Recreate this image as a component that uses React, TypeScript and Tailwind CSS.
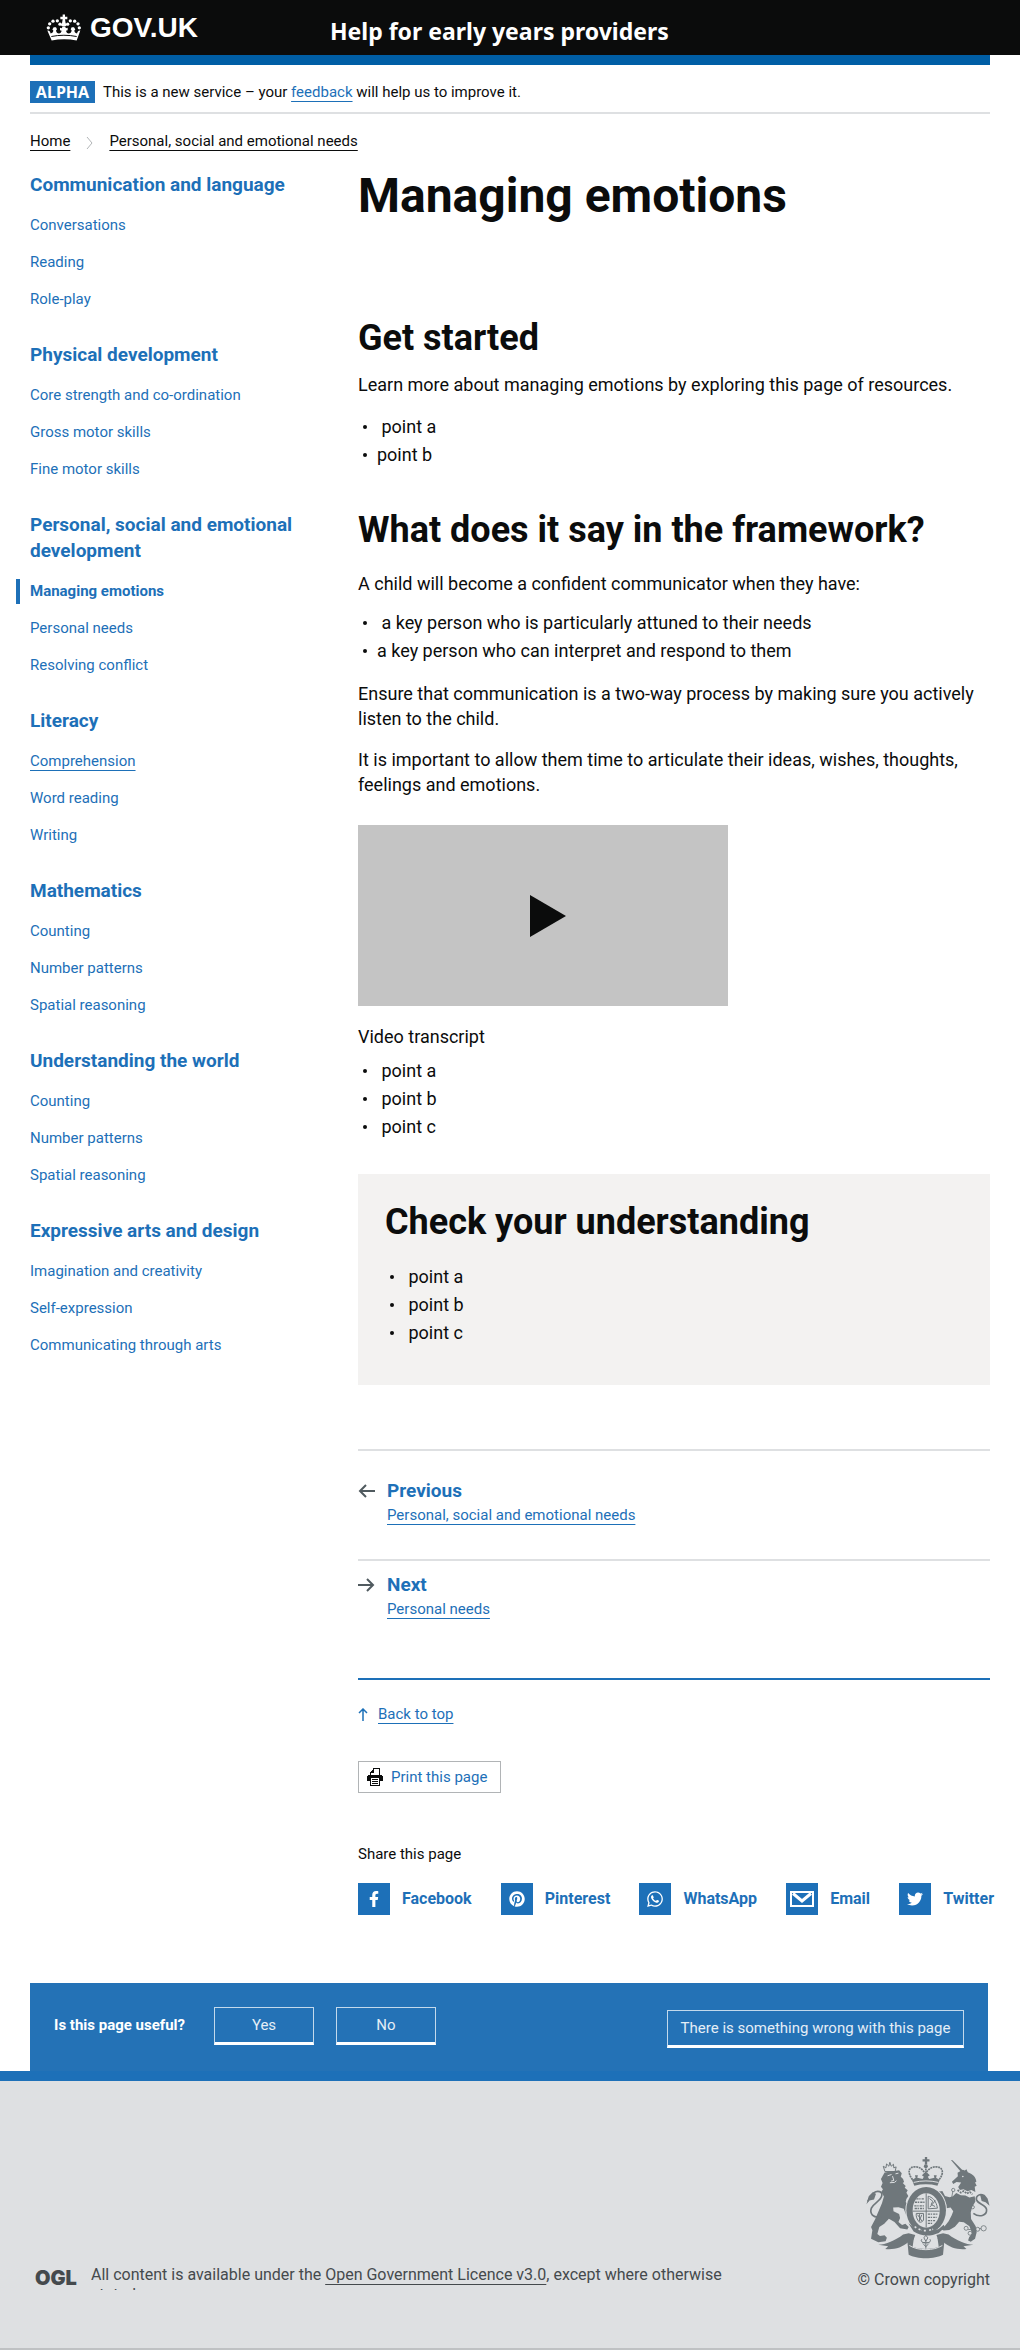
import type { ReactNode } from "react";
import { FaFacebookF, FaPinterest, FaTwitter, FaWhatsapp } from "react-icons/fa";

const topics = [
  { title: "Communication and language", items: ["Conversations", "Reading", "Role-play"] },
  { title: "Physical development", items: ["Core strength and co-ordination", "Gross motor skills", "Fine motor skills"] },
  { title: "Personal, social and emotional development", items: ["Managing emotions", "Personal needs", "Resolving conflict"] },
  { title: "Literacy", items: ["Comprehension", "Word reading", "Writing"] },
  { title: "Mathematics", items: ["Counting", "Number patterns", "Spatial reasoning"] },
  { title: "Understanding the world", items: ["Counting", "Number patterns", "Spatial reasoning"] },
  { title: "Expressive arts and design", items: ["Imagination and creativity", "Self-expression", "Communicating through arts"] },
];

function CrownLogo() {
  return (
    <svg viewBox="20 25 108 80" className="h-[27px] w-9 shrink-0" fill="#fff" aria-hidden="true">
      <path d="M70 26h7v7h7v7h-7l2 12 5 4-5 5h-11l-5-5 5-4 2-12h-7v-7h7z" />
      {[[27, 66], [31, 54], [41, 46], [54, 45], [62, 55], [120, 66], [116, 54], [106, 46], [93, 45], [85, 55]].map(([x, y]) => (
        <circle key={`${x}-${y}`} cx={x} cy={y} r="5" />
      ))}
      <path d="M24 74c6-1 8 3 10 9 5-1 8-4 8-9l-3-3 4-7h7l3 6-3 4c1 6 4 9 9 9 4 0 7-3 8-8l-5-2v-7l5 1 3-5h7l3 5 5-1v7l-5 2c1 5 4 8 8 8 5 0 8-3 9-9l-3-4 3-6h7l4 7-3 3c0 5 3 8 8 9 2-6 4-10 10-9l-11 30c-24-5-51-5-75 0z" />
      <path d="M36 92c24-5 51-5 76 0" stroke="#0b0c0c" strokeWidth="3" fill="none" />
    </svg>
  );
}

function PrinterIcon() {
  return (
    <svg viewBox="0 0 16 18" className="h-[18px] w-4 shrink-0" shapeRendering="crispEdges" aria-hidden="true">
      <path d="M6 0h7v8H3V4h1V3h1V2h1z" fill="#0b0c0c" />
      <path d="M7 1h5v6H4V5h3z" fill="#fff" />
      <path d="M0 8h1V7h14v1h1v5H0z" fill="#0b0c0c" />
      <path d="M4 7h8v-1H4z" fill="#fff" />
      <path d="M3 9h10v9H3z" fill="#0b0c0c" />
      <path d="M4 10h8v7H4z" fill="#fff" />
      <path d="M5 11h6v1H5zM5 13h6v1H5zM5 15h6v1H5z" fill="#0b0c0c" />
    </svg>
  );
}

function EnvelopeIcon() {
  return (
    <svg viewBox="0 0 24 16" className="h-4 w-6" fill="none" stroke="#fff" aria-hidden="true">
      <rect x="1" y="1" width="22" height="14" strokeWidth="2" />
      <path d="M3 2.5 12 10l9-7.5" strokeWidth="3" />
    </svg>
  );
}

function Arrow({ direction }: { direction: "left" | "right" | "up" }) {
  if (direction === "up") {
    return (
      <svg viewBox="0 0 10 13" className="h-[13px] w-2.5" fill="none" stroke="#1d70b8" strokeWidth="1.5" aria-hidden="true">
        <path d="M5 13V1M1 5l4-4 4 4" />
      </svg>
    );
  }
  return (
    <svg viewBox="0 0 17 14" className="h-3.5 w-[17px]" fill="none" stroke="#505a5f" strokeWidth="2" aria-hidden="true">
      {direction === "left" ? <path d="M17 7H2M8 1 2 7l6 6" /> : <path d="M0 7h15M9 1l6 6-6 6" />}
    </svg>
  );
}

function RoyalArms() {
  const ink = "#6f777b";
  const ground = "#dee0e2";
  return (
    <svg viewBox="75 48 376 312" className="h-[103px] w-[125px]" fill={ink} aria-hidden="true">
      {/* Lion */}
      <path d="M134 95l-5-16 8 5 2-12 7 7 3-12 4 12 7-6 1 11 7-3-3 14z" fill="none" stroke={ink} strokeWidth="3" />
      <path d="M133 98l44-7 8 9-3 11 7 7 3 9-4 3 9 9-3 5 9 8-4 7 6 10-6 9-2 9 12 14 3 17-4 11-10-3-7-18-16-5-16 1 1 11 17 9 3 12-5 12 11 9 10-4 10 10-4 8-22-4-17-19-17-10-14 15-15 10-6 21 8 6 14-2 7 8-4 10-22 3-22-10 4-26-4-10 12-23 21-49 6-20-8-14 5-8-6-8 5-11-5-12z" />
      <path d="M142 108l12-4m12-2l9-2m-18 9l4 13-8 2m-4 5l14-1 6-5" fill="none" stroke={ground} strokeWidth="3" />
      <path d="M122 232c-24 5-35-10-29-26 6-15 26-20 31-36 5-15-13-19-24-10-8 7-14 16-18 26" fill="none" stroke={ink} strokeWidth="5" />
      <path d="M78 194l7-24 12-12 10 4-6 18-14 3z" />
      {/* Unicorn */}
      <path d="M334 60l5 1 37 37-5 6z" />
      <path d="M354 99l16-9 6 2 5-4 4 9c14 5 25 14 26 29l-4 2 5 10-6 3 2 16-12-6-12 4-12-6-11 2-5-9 9-14-14-1-10 6-4-7 18-17z" />
      <circle cx="370" cy="110" r="2.5" fill={ground} />
      <path d="M354 151l10 8 9-5 9 8 9-5 8 7" fill="none" stroke={ink} strokeWidth="5" strokeDasharray="6 3" />
      <path d="M350 160l14 7 14 1 12 6 16-4 2 16-10 17-4 16 1 20 14 22 3 18-5 20-13 9-8-4 3-10 9-12-8-21-17-12-14-2-13 15-17 10-17 2-8-4 11-9 12-15 9-18 5-13-8-11-20 4-9-7 4-5 13 1-12-18-12-7-6-8 4-8 13-2 8 15 14 4 10-3z" />
      <path d="M402 222c18 13 41 7 40-11-1-17-27-16-31-31-2-13 13-19 22-12" fill="none" stroke={ink} strokeWidth="5" />
      <path d="M422 164l14 1 9 12 6 22-12-11-12-4z" />
      <g fill="none" stroke={ink} strokeWidth="2.5">
        <circle cx="380" cy="267" r="6" />
        <circle cx="392" cy="282" r="6" />
        <circle cx="415" cy="270" r="6" />
        <circle cx="433" cy="267" r="8" />
        <circle cx="341" cy="151" r="5" />
        <circle cx="335" cy="190" r="5" />
        <circle cx="400" cy="203" r="5" />
        <path d="M386 271l24-2m10-1h6m-86-114l-6 32" />
      </g>
      {/* Crown */}
      <path d="M255 51h7v7h7v7h-7v9h-7v-9h-7v-7h7z" />
      <circle cx="258" cy="79" r="6" />
      <path d="M218 120c-18-23-12-40 9-39 16 0 27 14 29 24 3-10 15-24 31-24 21-1 29 16 11 39M258 86v32" fill="none" stroke={ink} strokeWidth="5" strokeDasharray="6 2" />
      <path d="M216 121l11-7-2-8h9l-2 8 16 4 4-7-6-5 8-7h8l8 7-6 5 4 7 16-4-2-8h9l-2 8 11 7-7 17c-23-6-47-6-70 0z" />
      <path d="M221 128c24-6 50-6 75 0" fill="none" stroke={ground} strokeWidth="3" />
      {/* Garter and shield */}
      <ellipse cx="259" cy="212" rx="63" ry="73" fill={ground} />
      <ellipse cx="259" cy="212" rx="60" ry="70" />
      <ellipse cx="259" cy="213" rx="41" ry="52" fill={ground} />
      <path d="M259 161v104M218 215h82" stroke={ink} strokeWidth="3" />
      <g fill="none" stroke={ink} strokeWidth="4" strokeDasharray="7 2 4 3">
        <path d="M229 178h25M225 188h29M223 199h31M224 207h28" />
        <path d="M264 224h29M264 234h27M264 244h22M264 252h16" />
      </g>
      <path d="M265 170c12 2 25 14 28 36l-28 2zM270 203l17-20m-18-6l10 8-5 10 12 6M229 222h22v20c-6 8-12 9-16 2-5-7-7-14-6-22zm4 4l14 20m-8-22v22m7-20l-9 20" fill="none" stroke={ink} strokeWidth="3" />
      <path d="M205 252l20 15c22 13 47 12 72 2l15-13 4 8-19 17c-26 11-52 11-76-4z" />
      <path d="M224 262l8 5m4 2l10 4m6 1h10m6-1l12-3" fill="none" stroke={ground} strokeWidth="5" strokeDasharray="6 4" />
      {/* Ribbon */}
      <path d="M114 317c22 0 52-13 75-31l17-4 20 5-5 14-15 7c-20 18-45 25-71 22l9-9zM402 317c-22 0-52-13-75-31l-17-4-20 5 5 14 15 7c20 18 45 25 71 22l-9-9z" />
      <path d="M202 307l20-12-4 28c23 9 57 9 79 0l-4-28 21 12-4 40c-24 14-80 14-104 0z" />
      <path d="M208 319c27 17 73 17 100 0" fill="none" stroke={ground} strokeWidth="3" />
      <path d="M258 288l6 8-6 10-6-10zM246 300c-6 6 3 12 10 10m14-10c6 6-3 12-10 10m-13 1h22m-11-6v24m0-6l-7-8m7 8l7-8" fill="none" stroke={ink} strokeWidth="3" />
    </svg>
  );
}

const link = "text-[#1d70b8] underline decoration-1 underline-offset-4 [text-decoration-skip-ink:none]";

function Bullets({ items }: { items: string[] }) {
  return (
    <ul className="text-lg leading-7">
      {items.map((text) => (
        <li key={text} className="flex items-center pl-[5px]">
          <span className="mr-2.5 size-1 shrink-0 rounded-full bg-[#0b0c0c]" aria-hidden="true" />
          <span className="whitespace-pre-wrap">{text}</span>
        </li>
      ))}
    </ul>
  );
}

function Pager({ direction, label, page }: { direction: "left" | "right"; label: string; page: string }) {
  return (
    <div className="flex gap-3 leading-6">
      <span className="flex h-6 items-center">
        <Arrow direction={direction} />
      </span>
      <div>
        <div className="text-[19px] font-bold text-[#1d70b8]">{label}</div>
        <a href="#" className={`block text-[15px] ${link}`}>{page}</a>
      </div>
    </div>
  );
}

function ShareLink({ icon, label }: { icon: ReactNode; label: string }) {
  return (
    <li>
      <a href="#" className="flex items-center gap-3 text-base font-bold text-[#1d70b8]">
        <span className="flex size-8 shrink-0 items-center justify-center bg-[#1d70b8] text-white">{icon}</span>
        {label}
      </a>
    </li>
  );
}

function FeedbackButton({ children, className }: { children: ReactNode; className: string }) {
  return (
    <button type="button" className={`h-[38px] border border-b-[3px] border-[#c3d9ec] border-b-white text-[15px] leading-5 text-[#e4eef6] ${className}`}>
      {children}
    </button>
  );
}

export default function App() {
  return (
    <div id="top" className="bg-white font-['Roboto',sans-serif] text-[#0b0c0c]">
      <header>
        <div className="flex h-[55px] items-center bg-[#0b0c0c] text-white">
          <a href="#" className="flex w-[330px] shrink-0 items-center gap-2 pl-[46px]">
            <CrownLogo />
            <span className="font-['Liberation_Sans',sans-serif] text-[28px] leading-8 font-bold">GOV.UK</span>
          </a>
          <span className="pt-1.5 font-['Noto_Sans',sans-serif] text-[23px] leading-7 font-bold">Help for early years providers</span>
        </div>
        <div className="mx-[30px] h-2.5 bg-[#005ea5]" />
      </header>

      <div className="px-[30px]">
        <div className="flex items-center gap-2 border-b-2 border-[#dee0e2] pt-4 pb-[9px] text-[15px] leading-[22px]">
          <strong className="w-[65px] bg-[#1d70b8] text-center font-['Noto_Sans',sans-serif] text-base leading-[22px] text-white">ALPHA</strong>
          <p>
            This is a new service – your <a href="#" className={link}>feedback</a> will help us to improve it.
          </p>
        </div>

        <nav aria-label="Breadcrumb" className="mt-[17px]">
          <ol className="flex items-center text-[15px] leading-5">
            <li>
              <a href="#" className="underline underline-offset-4 [text-decoration-skip-ink:none]">Home</a>
            </li>
            <li className="mx-4 flex">
              <svg viewBox="0 0 7 12" className="mt-1 h-3 w-[7px]" fill="none" stroke="#b1b4b6" aria-hidden="true">
                <path d="M1 0l5 6-5 6" />
              </svg>
            </li>
            <li>
              <a href="#" className="underline underline-offset-4 [text-decoration-skip-ink:none]">Personal, social and emotional needs</a>
            </li>
          </ol>
        </nav>

        <div className="mt-5 flex">
          <nav aria-label="Topics" className="flex w-[328px] shrink-0 flex-col gap-6 pt-px pr-16">
            {topics.map((topic) => (
              <section key={topic.title}>
                <h2 className="mb-[9px] text-[19px] leading-[26px] font-bold text-[#1d70b8]">{topic.title}</h2>
                <ul className="text-[15px] leading-[37px] text-[#1d70b8]">
                  {topic.items.map((item) => (
                    <li key={item}>
                      {item === "Managing emotions" ? (
                        <a href="#" aria-current="page" className="-ml-3.5 flex h-[37px] items-center gap-2.5 font-bold">
                          <span className="h-[25px] w-1 bg-[#1d70b8]" aria-hidden="true" />
                          {item}
                        </a>
                      ) : (
                        <a href="#" className={item === "Comprehension" ? link : ""}>{item}</a>
                      )}
                    </li>
                  ))}
                </ul>
              </section>
            ))}
          </nav>

          <main className="min-w-0 flex-1">
            <h1 className="text-5xl leading-[50px] font-bold">Managing emotions</h1>

            <h2 className="mt-[97px] text-4xl leading-10 font-bold">Get started</h2>
            <p className="mt-3.5 mb-4 text-lg leading-[25px]">Learn more about managing emotions by exploring this page of resources.</p>
            <Bullets items={[" point a", "point b"]} />

            <h2 className="mt-[41px] text-4xl leading-10 font-bold">What does it say in the framework?</h2>
            <p className="mt-[21px] mb-[13px] text-lg leading-[25px]">A child will become a confident communicator when they have:</p>
            <Bullets items={[" a key person who is particularly attuned to their needs", "a key person who can interpret and respond to them"]} />
            <p className="mt-4 text-lg leading-[25px]">Ensure that communication is a two-way process by making sure you actively listen to the child.</p>
            <p className="mt-4 text-lg leading-[25px]">It is important to allow them time to articulate their ideas, wishes, thoughts, feelings and emotions.</p>

            <button type="button" aria-label="Play video" className="mt-7 flex h-[181px] w-[370px] items-center justify-center bg-[#c4c4c4] pl-2.5">
              <svg viewBox="0 0 36 42" className="h-[42px] w-9" fill="#0b0c0c" aria-hidden="true">
                <path d="M0 0l36 21L0 42z" />
              </svg>
            </button>
            <p className="mt-[18px] mb-2 text-lg leading-[25px]">Video transcript</p>
            <Bullets items={[" point a", " point b", " point c"]} />

            <section className="mt-[33px] bg-[#f3f2f1] px-[27px] pt-7 pb-[38px]">
              <h2 className="mb-[21px] text-4xl leading-10 font-bold">Check your understanding</h2>
              <Bullets items={[" point a", " point b", " point c"]} />
            </section>

            <nav aria-label="Pagination" className="mt-16">
              <div className="border-t-2 border-[#dee0e2] pt-7 pb-8">
                <Pager direction="left" label="Previous" page="Personal, social and emotional needs" />
              </div>
              <div className="border-t-2 border-[#dee0e2] pt-3 pb-[57px]">
                <Pager direction="right" label="Next" page="Personal needs" />
              </div>
            </nav>

            <div className="flex items-center gap-2.5 border-t-2 border-[#1d70b8] pt-[22px] text-[15px] leading-6">
              <Arrow direction="up" />
              <a href="#top" className={link}>Back to top</a>
            </div>

            <button type="button" className="mt-[35px] flex h-8 w-[143px] items-center gap-2 border border-[#b1b4b6] pl-2 text-[15px] text-[#1d70b8]">
              <PrinterIcon />
              Print this page
            </button>

            <h2 className="mt-[49px] text-[15px] leading-6">Share this page</h2>
            <ul className="mt-[17px] -mr-1 flex justify-between">
              <ShareLink icon={<FaFacebookF size={16} />} label="Facebook" />
              <ShareLink icon={<FaPinterest size={16} />} label="Pinterest" />
              <ShareLink icon={<FaWhatsapp size={18} />} label="WhatsApp" />
              <ShareLink icon={<EnvelopeIcon />} label="Email" />
              <ShareLink icon={<FaTwitter size={16} />} label="Twitter" />
            </ul>
          </main>
        </div>

        <section aria-label="Page feedback" className="mt-[68px] mr-0.5 flex h-[88px] items-start bg-[#2472b6] px-6 pt-6 text-white">
          <h2 className="w-40 text-[15px] leading-9 font-bold">Is this page useful?</h2>
          <FeedbackButton className="w-[100px]">Yes</FeedbackButton>
          <FeedbackButton className="ml-[22px] w-[100px]">No</FeedbackButton>
          <FeedbackButton className="mt-[3px] ml-auto w-[297px]">There is something wrong with this page</FeedbackButton>
        </section>
      </div>

      <footer className="flex items-end justify-between border-t-10 border-b-2 border-t-[#1d70b8] border-b-[#bfc1c3] bg-[#dee0e2] px-[30px] pt-[75px] pb-[57px] text-base text-[#454a4d]">
        <div className="flex items-start pl-[5px]">
          <span className="w-14 shrink-0 font-['Inter',sans-serif] text-xl leading-[26px] font-black" aria-label="Open Government Licence logo">OGL</span>
          <p className="h-[25px] max-w-[660px] overflow-hidden leading-5">
            All content is available under the{" "}
            <a href="#" className="underline underline-offset-4 [text-decoration-skip-ink:none]">Open Government Licence v3.0</a>, except where otherwise stated.
          </p>
        </div>
        <div className="flex shrink-0 flex-col items-end gap-2.5">
          <RoyalArms />
          <a href="#" className="leading-[22px]">© Crown copyright</a>
        </div>
      </footer>
    </div>
  );
}
